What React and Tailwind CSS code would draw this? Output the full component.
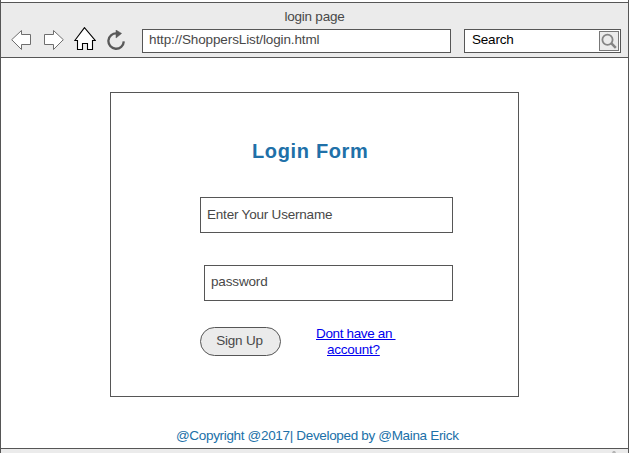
import React from 'react';

function BackIcon() {
  return (
    <svg className="block h-5 w-5" viewBox="0 0 20 20" fill="#fff" stroke="#6e6e6e" strokeWidth="1">
      <path d="M.7 9.7 10.5.5v4h9v10h-9v5z" />
    </svg>
  );
}

function ForwardIcon() {
  return (
    <svg className="block h-5 w-5" viewBox="0 0 20 20" fill="#fff" stroke="#6e6e6e" strokeWidth="1">
      <path d="M19.3 9.7 9.5.5v4h-9v10h9v5z" />
    </svg>
  );
}

function HomeIcon() {
  return (
    <svg className="block h-[24px] w-[22px]" viewBox="0 0 22 24" fill="#fff" stroke="#000" strokeWidth="1.1">
      <path d="M10.5.7 .8 13.5h2.7v9h5v-6h5v6h5v-9h2.7z" />
    </svg>
  );
}

function ReloadIcon() {
  return (
    <svg className="block h-[21px] w-[18px]" viewBox="0 0 18 21">
      <path d="M10 3.4A7.7 7.7 0 1 0 16.8 11.4" fill="none" stroke="#595959" strokeWidth="2.3" />
      <path d="M9 0 14.6 3.4 9 8z" fill="#595959" stroke="#595959" strokeWidth=".5" />
    </svg>
  );
}

function SearchIcon() {
  return (
    <svg className="block h-[18px] w-[18px]" viewBox="0 0 18 18" fill="none" stroke="#858585">
      <circle cx="7.5" cy="7.7" r="5.1" strokeWidth="1.8" />
      <path d="m11.2 11.2 4.6 4.6" strokeWidth="2.5" />
    </svg>
  );
}

function Toolbar() {
  return (
    <header className="h-14 shrink-0 border-y border-[#565656] bg-[#ebebeb]">
      <div className="flex h-[23px] items-start justify-center pt-[6px]">
        <span className="leading-4 tracking-[-0.25px]">login page</span>
      </div>
      <div className="flex h-[31px] items-start">
        <div className="ml-[10px] mt-[4px]"><BackIcon /></div>
        <div className="ml-[13px] mt-[4px]"><ForwardIcon /></div>
        <div className="ml-[10px] mt-px"><HomeIcon /></div>
        <div className="ml-[11px] mt-[4px]"><ReloadIcon /></div>
        <div className="ml-[17px] mt-[3px] h-6 w-[309px] border border-[#565656] bg-white pl-[6px] pt-[2px] leading-4 tracking-[-0.12px]">
          http://ShoppersList/login.html
        </div>
        <div className="ml-[13px] mt-[3px] flex h-6 w-[157px] justify-between border border-[#565656] bg-white pl-[7px] pr-px pt-px text-black">
          <span className="pt-px leading-4 tracking-[-0.2px]">Search</span>
          <span className="h-5 w-5 border border-[#777] bg-[#ebebeb]"><SearchIcon /></span>
        </div>
      </div>
    </header>
  );
}

function LoginCard() {
  return (
    <section className="ml-[109px] mt-[34px] h-[305px] w-[409px] border border-[#565656]">
      <h1 className="ml-[141px] mt-[46px] h-6 whitespace-nowrap text-[20px] font-bold leading-6 tracking-[0.65px] text-[#2070a8]">Login Form</h1>
      <div className="ml-[89px] mt-[34px] h-9 w-[253px] border border-[#565656] pl-[6px] pt-[9px] leading-4 tracking-[-0.2px]">
        Enter Your Username
      </div>
      <div className="ml-[93px] mt-8 h-9 w-[249px] border border-[#565656] pl-[6px] pt-[8px] leading-4 tracking-[-0.15px]">
        password
      </div>
      <div className="ml-[89px] mt-[25px] flex items-start">
        <button className="mt-px h-[29px] w-[81px] rounded-full border border-[#565656] bg-[#ebebeb] pb-px pr-[2px] leading-4 tracking-[-0.2px]">Sign Up</button>
        <a className="ml-[35px] w-[79px] whitespace-pre text-[#0000ee] underline underline-offset-1">
          <span className="block h-4 leading-4 tracking-[-0.35px]">Dont have an </span>
          <span className="ml-[11px] block h-4 leading-4 tracking-[-0.25px]">account?</span>
        </a>
      </div>
    </section>
  );
}

export default function App() {
  return (
    <div className="h-[453px] w-[635px] overflow-hidden bg-white font-['Liberation_Sans',Arial,sans-serif] text-[13.5px] text-[#484848]">
      <div className="flex h-full w-[629px] flex-col border-x border-[#565656] pt-[2px]">
        <Toolbar />
        <main className="h-[390px] shrink-0">
          <LoginCard />
          <p className="ml-[175px] mt-[31px] whitespace-nowrap leading-4 tracking-[-0.33px] text-[#2070a8]">@Copyright @2017| Developed by @Maina Erick</p>
        </main>
        <footer className="flex flex-1 justify-end border-t border-[#565656] bg-[#ebebeb] pr-[12px] pt-[2px]">
          <svg className="h-[2px] w-[4px]" viewBox="0 0 4 2"><path d="M0 2 1 0h2l1 2z" fill="#b5b5b5" /></svg>
        </footer>
      </div>
    </div>
  );
}
